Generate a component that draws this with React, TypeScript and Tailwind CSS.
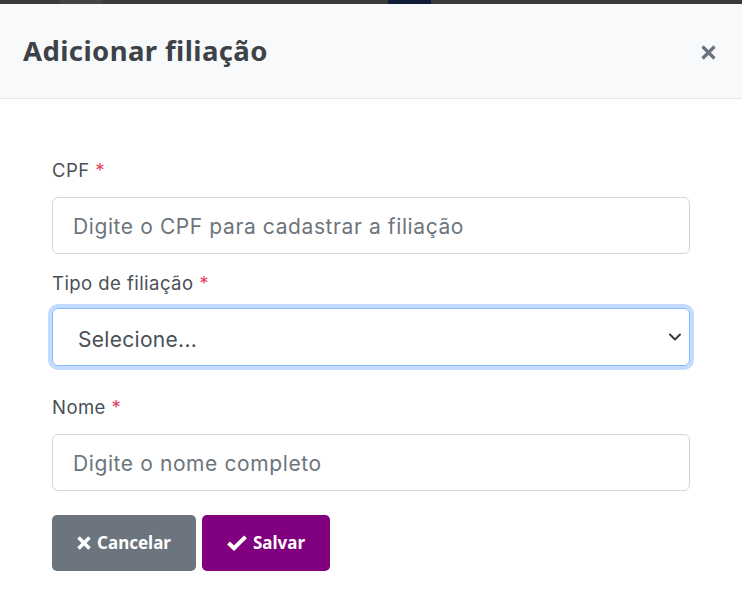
import React from "react";

const font = { fontFamily: 'Inter, "Noto Sans", sans-serif' };
const notoFont = { fontFamily: '"Noto Sans", sans-serif' };

function Label({ children }: { children: React.ReactNode }) {
  return (
    <label className="block text-[18.5px] leading-[27px] tracking-[0.45px] text-[#495057]">
      {children} <span className="text-[#e3435f]">*</span>
    </label>
  );
}

export default function App() {
  return (
    <div className="w-[742px] h-[593px] bg-[#3a3a3a] overflow-hidden" style={font}>
      <div className="h-[4px] flex">
        <div className="w-[60px]" />
        <div className="w-[43px] bg-[#444]" />
        <div className="w-[285px]" />
        <div className="w-[43px] bg-[#0f1d3a]" />
      </div>
      <div className="bg-white h-[589px] rounded-tl-[3px]">
        <div className="h-[95px] bg-[#f8f9fa] border-b border-[#e3e6ea] flex items-center justify-between pl-[23px] pr-[25px]">
          <h1 className="text-[27.5px] font-bold tracking-[0.4px] text-[#3d4248] leading-none" style={notoFont}>
            Adicionar filiação
          </h1>
          <svg width="17" height="17" viewBox="0 0 17 17" className="mt-[2px]">
            <path d="M2.5 2.5 L14.5 14.5 M14.5 2.5 L2.5 14.5" stroke="#6c757d" strokeWidth="3.2" strokeLinecap="butt" />
          </svg>
        </div>
        <div className="px-[52px] pt-[58px]">
          <Label>CPF</Label>
          <div className="mt-[13px] h-[57px] border border-[#ced4da] rounded-[6px] flex items-center pl-[20px] pt-[2px] text-[21px] tracking-[0.6px] text-[#6c757d]">
            Digite o CPF para cadastrar a filiação
          </div>
          <div className="mt-[16px]">
            <Label>Tipo de filiação</Label>
          </div>
          <div className="mt-[11px] h-[58px] border border-[#86b7fe] rounded-[6px] flex items-center justify-between pl-[25px] pr-[7px] text-[21px] tracking-[0.3px] text-[#495057] shadow-[0_0_0_4px_#c2dbfe]">
            <span className="pt-[5px]">Selecione...</span>
            <svg width="14" height="10" viewBox="0 0 14 10">
              <path d="M2 2.5 L7 7.5 L12 2.5" stroke="#343a40" strokeWidth="2" fill="none" strokeLinecap="round" strokeLinejoin="round" />
            </svg>
          </div>
          <div className="mt-[28px]">
            <Label>Nome</Label>
          </div>
          <div className="mt-[13px] h-[57px] border border-[#ced4da] rounded-[6px] flex items-center pl-[20px] pt-[2px] text-[21px] tracking-[0.6px] text-[#6c757d]">
            Digite o nome completo
          </div>
          <div className="mt-[24px] flex gap-[6px]" style={notoFont}>
            <button className="h-[56px] w-[144px] bg-[#6c757d] rounded-[5px] text-white font-bold text-[17px] flex items-center justify-center gap-[6px]">
              <svg width="14" height="14" viewBox="0 0 14 14">
                <path d="M1.5 1.5 L12.5 12.5 M12.5 1.5 L1.5 12.5" stroke="#fff" strokeWidth="3.6" strokeLinecap="butt" />
              </svg>
              Cancelar
            </button>
            <button className="h-[56px] w-[128px] bg-[#800080] rounded-[5px] text-white font-bold text-[17px] flex items-center justify-center gap-[6px]">
              <svg width="20" height="16" viewBox="0 0 20 16">
                <path d="M1.5 8 L7 13.2 L18.5 1.8" stroke="#fff" strokeWidth="4" fill="none" strokeLinecap="butt" strokeLinejoin="miter" />
              </svg>
              Salvar
            </button>
          </div>
        </div>
      </div>
    </div>
  );
}
